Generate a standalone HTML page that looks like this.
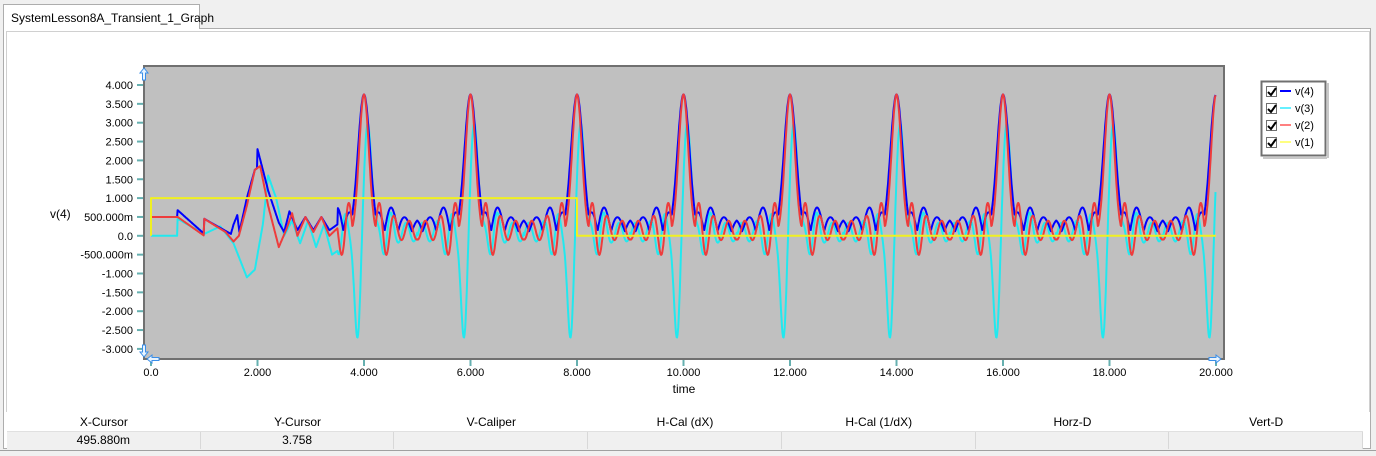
<!DOCTYPE html>
<html><head><meta charset="utf-8"><style>
body{margin:0;width:1376px;height:455px;background:#f0f0f0;font-family:"Liberation Sans",sans-serif;overflow:hidden;position:relative}
.tab{position:absolute;left:3px;top:4px;width:197px;height:25px;background:#fff;border:1px solid #adadad;border-bottom:none;font-size:12px;line-height:26px;padding-left:7px;box-sizing:border-box;z-index:2}
.frame{position:absolute;left:3px;top:28px;width:1368px;height:421px;border:1px solid #adadad;background:#fff;box-sizing:border-box}
.inner{position:absolute;left:6px;top:31px;width:1364px;height:381px;border:1px solid #d0d0d0;border-bottom:none;background:#fff;box-sizing:border-box}
.tbl{position:absolute;left:7px;top:414px;width:1356px;font-size:12px}
.row{display:flex;height:17px;line-height:17px}
.row div{width:194px;text-align:center;box-sizing:border-box}
.r2 div{border-right:1px solid #d8d8d8}
.bot{position:absolute;left:0;top:450px;width:1376px;height:5px;background:#f0f0f0;border-top:1px solid #a0a0a0}
</style></head><body>
<div class="frame"></div>
<div class="tab">SystemLesson8A_Transient_1_Graph</div>
<div class="inner"></div>
<svg id="g" width="1376" height="455" style="position:absolute;left:0;top:0" font-family="Liberation Sans, sans-serif" font-size="11">
<rect x="144" y="66" width="1080" height="293" fill="#c0c0c0" stroke="#707070" stroke-width="2"/>
<g id="ylab" text-anchor="end"></g>
<g id="xlab" text-anchor="middle"></g>
<text x="50" y="218" font-size="12">v(4)</text>
<text x="684" y="393" font-size="12" text-anchor="middle">time</text>
<g id="waves" fill="none" stroke-width="2" stroke-linejoin="round"></g>
<g fill="#e8f4ff" stroke="#3a8ee8" stroke-width="1">
<path d="M144 68 l-4 5 h2.5 v7 h3 v-7 h2.5z"/>
<path d="M144 357 l-4 -5 h2.5 v-7 h3 v7 h2.5z"/>
<path d="M147 359 l5 -4 v2.5 h7 v3 h-7 v2.5z"/>
<path d="M1221 359 l-5 -4 v2.5 h-7 v3 h7 v2.5z"/>
</g>
<rect x="1261.5" y="81.5" width="64" height="74" fill="#fff" stroke="#707070" stroke-width="2"/>
<rect x="1263" y="157" width="64" height="2" fill="#c8c8c8"/>
<rect x="1327" y="83" width="2" height="75" fill="#c8c8c8"/>
<g id="leg" font-size="11"></g>
</svg>
<div class="tbl">
<div class="row"><div>X-Cursor</div><div>Y-Cursor</div><div>V-Caliper</div><div>H-Cal (dX)</div><div>H-Cal (1/dX)</div><div>Horz-D</div><div>Vert-D</div></div>
<div class="row r2" style="background:#f0f0f0;border-top:1px solid #e0e0e0"><div>495.880m</div><div>3.758</div><div></div><div></div><div></div><div></div><div></div></div>
</div>
<div class="bot"></div>
<script>
const NS="http://www.w3.org/2000/svg";
const X=t=>151+t*53.25, Y=v=>235.8-v*37.7;
function el(p,n,a,txt){const e=document.createElementNS(NS,n);for(const k in a)e.setAttribute(k,a[k]);if(txt!=null)e.textContent=txt;document.getElementById(p).appendChild(e);return e;}
const yl=["4.000","3.500","3.000","2.500","2.000","1.500","1.000","500.000m","0.0","-500.000m","-1.000","-1.500","-2.000","-2.500","-3.000"];
yl.forEach((s,i)=>{const v=4-i*0.5,y=Y(v);el("ylab","text",{x:133,y:y+4},s);el("ylab","line",{x1:137,x2:143,y1:y,y2:y,stroke:"#66b0b0","stroke-width":2});});
for(let i=0;i<=10;i++){const x=X(i*2);el("xlab","text",{x:x,y:376},i==0?"0.0":(i*2).toFixed(3));el("xlab","line",{x1:x,x2:x,y1:360,y2:366,stroke:"#66b0b0","stroke-width":2});}
function nd(t){let p=Math.round(t/2)*2;if(p<4)p=4;return t-p;}
const P=0.257;
function pk(d,s){return 3.75*Math.exp(-Math.pow(d/s,2));}
function early(t,arr){for(let i=0;i<arr.length-1;i++){if(t>=arr[i][0]&&t<=arr[i+1][0]){const a=arr[i],b=arr[i+1];return a[1]+(b[1]-a[1])*(t-a[0])/((b[0]-a[0])||1);}}return 0;}
const E4=[[0,.5],[.5,.5],[.5,.68],[1,.05],[1,.45],[1.5,.05],[1.55,.3],[1.62,.55],[1.66,.1],[1.8,1.0],[1.95,1.75],[2.0,1.8],[2.0,2.3],[2.2,1.2],[2.4,.35],[2.5,.1],[2.6,.65],[2.75,.15],[2.9,.5],[3.05,.15],[3.2,.5],[3.35,.15],[3.5,.3]];
const E2=[[0,.5],[.5,.5],[.5,.5],[1,.0],[1,.45],[1.4,.1],[1.55,-.15],[1.65,0],[1.8,.8],[1.95,1.75],[2.05,1.85],[2.2,.8],[2.4,-.3],[2.55,.2],[2.65,.6],[2.75,0],[2.9,.5],[3.05,.1],[3.2,.5],[3.35,0],[3.5,.2]];
const E3=[[0,0],[.5,0],[.5,.45],[1,.05],[1,.05],[1.3,.25],[1.55,-.2],[1.8,-1.1],[1.95,-.9],[2.1,.3],[2.2,1.6],[2.35,1.0],[2.5,0],[2.65,.4],[2.8,-.2],[2.95,.4],[3.1,-.3],[3.25,.3],[3.4,-.5],[3.5,-.4]];
function v4(t){if(t<3.5)return early(t,E4);const d=nd(t);const A=.3+.35*Math.exp(-Math.pow((Math.abs(d)-.45)/.25,2));return Math.max(pk(d,.16),.12+A*Math.abs(Math.cos(Math.PI*d/P)));}
function v2(t){if(t<3.5)return early(t,E2);const d=nd(t);const ad=Math.abs(d);const A=.25+.5*Math.exp(-Math.pow((ad-.33)/.2,2));const r=.15+A*Math.cos(2*Math.PI*d/(P*1.1));return ad<.25?Math.max(pk(d,.13),r):r;}
function v3(t){if(t<3.5)return early(t,E3);const d=nd(t);const ad=Math.abs(d);
 const r=.1+(.25+.5*Math.exp(-Math.pow((ad-.4)/.15,2)))*Math.cos(2*Math.PI*d/(P*1.1)+Math.PI*.4);
 return r*(1-Math.exp(-Math.pow(d/.3,2)))-2.8*Math.exp(-Math.pow((d+.12)/.08,2))+3.0*Math.exp(-Math.pow((d-.07)/.1,2));}
function path(f,col){let d="";for(let t=0;t<=20;t+=0.01){const x=X(t),y=Math.max(67,Math.min(358,Y(f(t))));d+=(d?"L":"M")+x.toFixed(1)+" "+y.toFixed(1);}el("waves","path",{d:d,stroke:col});}
path(v3,"#22e8ee");path(v4,"#0000ff");path(v2,"#ee3c3c");
el("waves","path",{d:`M${X(0)} ${Y(0)}V${Y(1)}H${X(8)}V${Y(0)}H${X(20)}`,stroke:"#f0f020"});
const L=[["v(4)","#0000ff"],["v(3)","#66f0ff"],["v(2)","#ff8080"],["v(1)","#ffff80"]];
L.forEach((l,i)=>{const y=86+i*17;el("leg","rect",{x:1266.5,y:y+.5,width:10,height:10,fill:"#fff",stroke:"#707070"});el("leg","path",{d:`M1268 ${y+6}l3 3 5-7`,stroke:"#000","stroke-width":2,fill:"none"});el("leg","line",{x1:1280,x2:1291,y1:y+5,y2:y+5,stroke:l[1],"stroke-width":2});el("leg","text",{x:1295,y:y+9},l[0]);});
</script>
</body></html>
